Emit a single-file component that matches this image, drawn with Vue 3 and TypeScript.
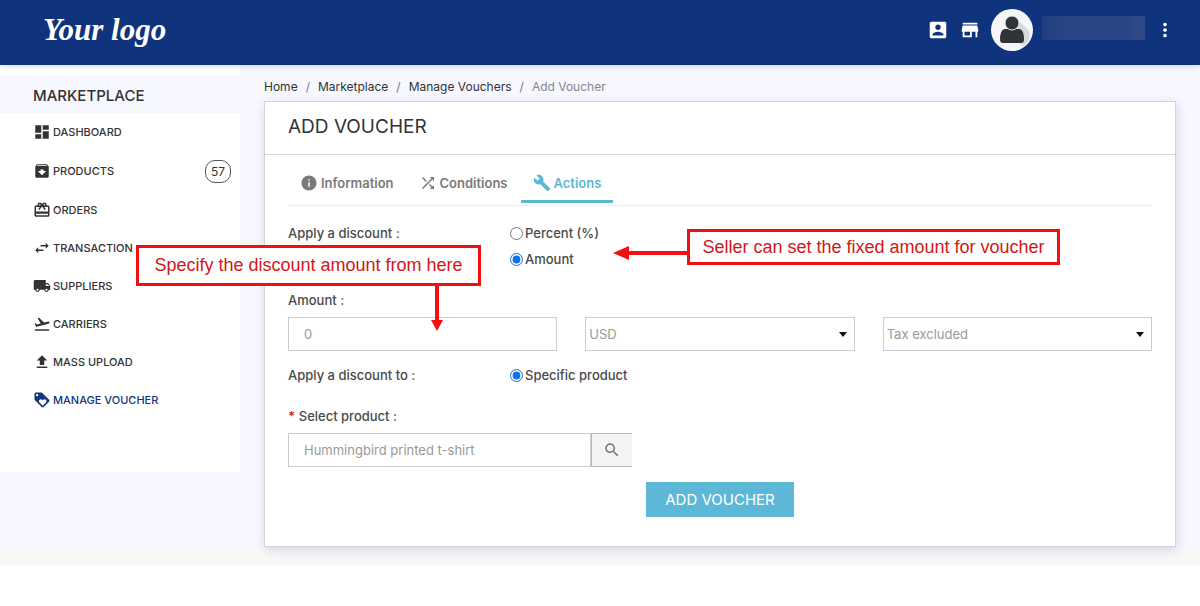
<script setup lang="ts">
import { ref } from 'vue'

interface MenuItem {
  label: string
  icon: string
  badge?: number
  active?: boolean
}

interface Tab {
  label: string
  icon: string
}

const menu: MenuItem[] = [
  { label: 'DASHBOARD', icon: 'M3 13h8V3H3v10zm0 8h8v-6H3v6zm10 0h8V11h-8v10zm0-18v6h8V3h-8z' },
  {
    label: 'PRODUCTS',
    badge: 57,
    icon: 'M20.54 5.23l-1.39-1.68C18.88 3.21 18.47 3 18 3H6c-.47 0-.88.21-1.16.55L3.46 5.23C3.17 5.57 3 6.02 3 6.5V19c0 1.1.9 2 2 2h14c1.1 0 2-.9 2-2V6.5c0-.48-.17-.93-.46-1.27zM12 17.5L6.5 12H10v-2h4v2h3.5L12 17.5zM5.12 5l.81-1h12l.94 1H5.12z',
  },
  {
    label: 'ORDERS',
    icon: 'M20 6h-2.18c.11-.31.18-.65.18-1 0-1.66-1.34-3-3-3-1.05 0-1.96.54-2.5 1.35l-.5.67-.5-.68C10.96 2.54 10.05 2 9 2 7.34 2 6 3.34 6 5c0 .35.07.69.18 1H4c-1.11 0-1.99.89-1.99 2L2 19c0 1.11.89 2 2 2h16c1.11 0 2-.89 2-2V8c0-1.11-.89-2-2-2zm-5-2c.55 0 1 .45 1 1s-.45 1-1 1-1-.45-1-1 .45-1 1-1zM9 4c.55 0 1 .45 1 1s-.45 1-1 1-1-.45-1-1 .45-1 1-1zm11 15H4v-2h16v2zm0-5H4V8h5.08L7 10.83 8.62 12 11 8.76l1-1.36 1 1.36L15.38 12 17 10.83 14.92 8H20v6z',
  },
  { label: 'TRANSACTION', icon: 'M6.99 11L3 15l3.99 4v-3H14v-2H6.99v-3zM21 9l-3.99-4v3H10v2h7.01v3L21 9z' },
  {
    label: 'SUPPLIERS',
    icon: 'M20 8h-3V4H3c-1.1 0-2 .9-2 2v11h2c0 1.66 1.34 3 3 3s3-1.34 3-3h6c0 1.66 1.34 3 3 3s3-1.34 3-3h2v-5l-3-4zM6 18.5c-.83 0-1.5-.67-1.5-1.5s.67-1.5 1.5-1.5 1.5.67 1.5 1.5-.67 1.5-1.5 1.5zm13.5-9l1.96 2.5H17V9.5h2.5zm-1.5 9c-.83 0-1.5-.67-1.5-1.5s.67-1.5 1.5-1.5 1.5.67 1.5 1.5-.67 1.5-1.5 1.5z',
  },
  {
    label: 'CARRIERS',
    icon: 'M2.5 19h19v2h-19zm19.57-9.36c-.21-.8-1.04-1.28-1.84-1.06L14.92 10l-6.9-6.43-1.93.51 4.14 7.17-4.97 1.33-1.97-1.54-1.45.39 1.82 3.16.77 1.33 1.6-.43 5.31-1.42 4.35-1.16L21 11.49c.81-.23 1.28-1.05 1.07-1.85z',
  },
  { label: 'MASS UPLOAD', icon: 'M9 16h6v-6h4l-7-7-7 7h4zm-4 2h14v2H5z' },
  {
    label: 'MANAGE VOUCHER',
    active: true,
    icon: 'M21.41 11.58l-9-9C12.05 2.22 11.55 2 11 2H4c-1.1 0-2 .9-2 2v7c0 .55.22 1.05.59 1.42l9 9c.36.36.86.58 1.41.58.55 0 1.05-.22 1.41-.59l7-7c.37-.36.59-.86.59-1.41 0-.55-.23-1.06-.59-1.42zM5.5 7C4.67 7 4 6.33 4 5.5S4.67 4 5.5 4 7 4.67 7 5.5 6.33 7 5.5 7zm11.77 8.27L13 19.54l-4.27-4.27C8.28 14.81 8 14.19 8 13.5c0-1.38 1.12-2.5 2.5-2.5.69 0 1.32.28 1.77.74l.73.72.73-.73c.45-.45 1.08-.73 1.77-.73 1.38 0 2.5 1.12 2.5 2.5 0 .69-.28 1.32-.73 1.77z',
  },
]

const tabs: Tab[] = [
  {
    label: 'Information',
    icon: 'M12 2C6.48 2 2 6.48 2 12s4.48 10 10 10 10-4.48 10-10S17.52 2 12 2zm1 15h-2v-6h2v6zm0-8h-2V7h2v2z',
  },
  {
    label: 'Conditions',
    icon: 'M10.59 9.17L5.41 4 4 5.41l5.17 5.17 1.42-1.41zM14.5 4l2.04 2.04L4 18.59 5.41 20 17.96 7.46 20 9.5V4h-5.5zm.33 9.41l-1.41 1.41 3.13 3.13L14.5 20H20v-5.5l-2.04 2.04-3.13-3.13z',
  },
  {
    label: 'Actions',
    icon: 'M22.7 19l-9.1-9.1c.9-2.3.4-5-1.5-6.9-2-2-5-2.4-7.4-1.3L9 6 6 9 1.6 4.7C.4 7.1.9 10.1 2.9 12.1c1.9 1.9 4.6 2.4 6.9 1.5l9.1 9.1c.4.4 1 .4 1.4 0l2.3-2.3c.5-.4.5-1.1.1-1.4z',
  },
]

const activeTab = ref('Actions')
const discountType = ref('amount')
const discountTarget = ref('specific')
const currency = ref('USD')
const tax = ref('excluded')
const amount = ref('')
const product = ref('')
</script>

<template>
  <div class="page">
    <header class="topbar">
      <a class="logo" href="#">Your logo</a>
      <div class="account">
        <a href="#" class="top-icon" aria-label="Profile">
          <svg viewBox="0 0 24 24"><path d="M3 5v14c0 1.1.89 2 2 2h14c1.1 0 2-.9 2-2V5c0-1.1-.9-2-2-2H5c-1.11 0-2 .9-2 2zm12 4c0 1.66-1.34 3-3 3s-3-1.34-3-3 1.34-3 3-3 3 1.34 3 3zm-9 8c0-2 4-3.1 6-3.1s6 1.1 6 3.1v1H6v-1z" /></svg>
        </a>
        <a href="#" class="top-icon" aria-label="Shop">
          <svg viewBox="0 0 24 24"><path d="M20 4H4v2h16V4zm1 10v-2l-1-5H4l-1 5v2h1v6h10v-6h4v6h2v-6h1zm-9 4H6v-4h6v4z" /></svg>
        </a>
        <svg class="avatar" viewBox="0 0 42 42">
          <circle cx="21" cy="21" r="21" fill="#f5f6f8" />
          <path d="M26 10L38 22c2 6-1 12-6 15l-4-3z" fill="#d5d8dd" />
          <path d="M14 20h14c3 0 5 4 5 10 0 3-1 4-3 4H12c-2 0-3-1-3-4 0-6 2-10 5-10z" fill="#303338" />
          <circle cx="21" cy="14" r="7" fill="#303338" stroke="#e9ebee" />
        </svg>
        <span class="username" aria-hidden="true"></span>
        <button class="more" type="button" aria-label="More">
          <svg viewBox="0 0 24 24"><path d="M12 8c1.1 0 2-.9 2-2s-.9-2-2-2-2 .9-2 2 .9 2 2 2zm0 2c-1.1 0-2 .9-2 2s.9 2 2 2 2-.9 2-2-.9-2-2-2zm0 6c-1.1 0-2 .9-2 2s.9 2 2 2 2-.9 2-2-.9-2-2-2z" /></svg>
        </button>
      </div>
    </header>

    <div class="body">
      <aside class="sidebar">
        <h2>MARKETPLACE</h2>
        <nav class="menu">
          <a v-for="item in menu" :key="item.label" href="#" class="menu-item" :class="{ active: item.active, badged: item.badge }">
            <svg viewBox="0 0 24 24"><path :d="item.icon" /></svg>
            <span class="menu-label">{{ item.label }}</span>
            <span v-if="item.badge" class="badge">{{ item.badge }}</span>
          </a>
        </nav>
      </aside>

      <main class="content">
        <nav class="crumbs" aria-label="Breadcrumb">
          <a href="#">Home</a><i>/</i><a href="#">Marketplace</a><i>/</i><a href="#">Manage Vouchers</a><i>/</i><span>Add Voucher</span>
        </nav>

        <section class="card">
          <h1>ADD VOUCHER</h1>
          <form class="form" @submit.prevent>
            <div class="tabs" role="tablist">
              <button
                v-for="tab in tabs"
                :key="tab.label"
                type="button"
                role="tab"
                class="tab"
                :class="{ active: activeTab === tab.label }"
                :aria-selected="activeTab === tab.label"
                @click="activeTab = tab.label"
              >
                <svg viewBox="0 0 24 24"><path :d="tab.icon" /></svg>
                <span>{{ tab.label }}</span>
              </button>
            </div>

            <div class="choice-row">
              <span id="type-label" class="caption">Apply a discount :</span>
              <div class="choices" role="radiogroup" aria-labelledby="type-label">
                <label><input v-model="discountType" type="radio" name="type" value="percent" /><span>Percent (%)</span></label>
                <label><input v-model="discountType" type="radio" name="type" value="amount" /><span>Amount</span></label>
              </div>
            </div>

            <div class="field">
              <label class="caption" for="amount">Amount :</label>
              <div class="amounts">
                <input id="amount" v-model="amount" class="box" type="text" placeholder="0" />
                <div class="select">
                  <select v-model="currency" class="box" aria-label="Currency"><option value="USD">USD</option></select>
                </div>
                <div class="select">
                  <select v-model="tax" class="box" aria-label="Tax"><option value="excluded">Tax excluded</option></select>
                </div>
              </div>
            </div>

            <div class="choice-row target">
              <span id="target-label" class="caption">Apply a discount to :</span>
              <div class="choices" role="radiogroup" aria-labelledby="target-label">
                <label><input v-model="discountTarget" type="radio" name="target" value="specific" /><span>Specific product</span></label>
              </div>
            </div>

            <div class="field">
              <label class="caption" for="product"><b>*</b> Select product :</label>
              <div class="search">
                <input id="product" v-model="product" class="box" type="text" placeholder="Hummingbird printed t-shirt" />
                <button type="button" aria-label="Search">
                  <svg viewBox="0 0 24 24"><path d="M15.5 14h-.79l-.28-.27C15.41 12.59 16 11.11 16 9.5 16 5.91 13.09 3 9.5 3S3 5.91 3 9.5 5.91 16 9.5 16c1.61 0 3.09-.59 4.23-1.57l.27.28v.79l5 4.99L20.49 19l-4.99-5zm-6 0C7.01 14 5 11.99 5 9.5S7.01 5 9.5 5 14 7.01 14 9.5 11.99 14 9.5 14z" /></svg>
                </button>
              </div>
            </div>

            <button class="submit" type="submit">ADD VOUCHER</button>
          </form>
        </section>
      </main>
    </div>
    <div class="footer-strip"></div>

    <div class="note note-amount">
      Specify the discount amount from here
      <svg class="arrow-down" viewBox="0 0 12 48"><path d="M4 0h4v37h4L6 48 0 37h4z" /></svg>
    </div>
    <div class="note note-fixed">
      Seller can set the fixed amount for voucher
      <svg class="arrow-left" viewBox="0 0 77 14"><path d="M77 5H16V0L0 7l16 7V9h61z" /></svg>
    </div>
  </div>
</template>

<style>
body {
  margin: 0;
  background: #fff;
}
</style>

<style scoped>
.page {
  position: relative;
  font-family: Inter, "Open Sans", sans-serif;
  font-size: 13px;
  color: #333;
}
.page *,
.page *::before {
  box-sizing: border-box;
}
a {
  color: inherit;
  text-decoration: none;
}
svg {
  display: block;
  fill: currentColor;
  flex: none;
}
button,
input,
select {
  font: inherit;
}
.topbar {
  position: relative;
  display: flex;
  align-items: center;
  justify-content: space-between;
  height: 65px;
  padding: 0 24px 5px 43px;
  background: #0f337c;
  box-shadow: 0 1px 6px rgba(40, 50, 90, 0.2);
  color: #fff;
}
.logo {
  font: italic 700 31px/40px "Liberation Serif", cursive;
}
.account {
  display: flex;
  align-items: center;
}
.top-icon svg {
  width: 22px;
  height: 22px;
}
.top-icon {
  margin-right: 10px;
}
.avatar {
  width: 42px;
  height: 42px;
}
.username {
  align-self: flex-start;
  width: 103px;
  height: 24px;
  margin: 7px 9px 0;
  background: linear-gradient(90deg, #213f80, #2a4685 30%, #294484 80%, #2f4a86);
}
.more {
  padding: 0;
  border: 0;
  background: none;
  color: inherit;
}
.more svg {
  width: 22px;
  height: 22px;
}
.body {
  display: flex;
  align-items: flex-start;
  background: #f6f7ff;
}
.sidebar {
  flex: 0 0 240px;
  padding-top: 11px;
  background: #fff;
}
.sidebar h2 {
  margin: 0;
  padding: 2px 0 0 33px;
  background: #f6f7ff;
  font-size: 15px;
  font-weight: 500;
  line-height: 35px;
}
.menu {
  display: flex;
  flex-direction: column;
  padding: 0 9px 53px 33px;
}
.menu-item {
  display: flex;
  align-items: center;
  gap: 2px;
  height: 38px;
  font-size: 11px;
  font-weight: 500;
}
.menu-item svg {
  width: 18px;
  height: 18px;
}
.menu-item.badged {
  height: 40px;
}
.menu-item.active {
  color: #12357e;
}
.badge {
  margin-left: auto;
  padding: 0 5px;
  border: 1px solid #555;
  border-radius: 10px;
  font-size: 12px;
  font-weight: 400;
  line-height: 21px;
}
.content {
  flex: 1;
  min-width: 0;
  padding: 11px 24px 1px;
}
.crumbs {
  display: flex;
  height: 25px;
  font-size: 12px;
  line-height: 21px;
  white-space: nowrap;
}
.crumbs i {
  margin: 0 8px;
  color: #777;
  font-style: normal;
}
.crumbs span {
  color: #888;
}
.card {
  border: 1px solid #d3d4da;
  background: #fff;
  box-shadow: 1px 3px 10px rgba(50, 50, 100, 0.16);
}
h1 {
  margin: 0;
  padding: 0 23px 2px;
  border-bottom: 1px solid #d3d4d8;
  font-size: 19px;
  font-weight: 400;
  line-height: 50px;
}
.form {
  display: flex;
  flex-direction: column;
  padding: 10px 23px 29px;
  color: #4a4a4a;
}
.tabs {
  display: flex;
  gap: 1px;
  height: 41px;
  border-bottom: 1px solid #eee;
}
.tab {
  display: flex;
  align-items: center;
  gap: 3px;
  height: 38px;
  padding: 0 12px;
  border: 0;
  border-bottom: 3px solid transparent;
  background: none;
  color: #7a7a7a;
  font-weight: 600;
}
.tab svg {
  width: 18px;
  height: 18px;
}
.tab.active {
  border-color: #5cb8ce;
  color: #5cb8d6;
}
.caption {
  font-weight: 500;
  line-height: 20px;
}
.caption b {
  color: #d9301a;
}
.choice-row {
  display: grid;
  grid-template-columns: minmax(0, 222px) 1fr;
  margin-top: 17px;
}
.choices {
  display: flex;
  flex-direction: column;
  align-items: flex-start;
  gap: 6px;
}
.choices label {
  display: flex;
  align-items: center;
  gap: 2px;
  font-weight: 500;
  line-height: 20px;
}
.choices input {
  width: 13px;
  height: 13px;
  margin: 0;
  accent-color: #0b74e8;
}
.field {
  display: flex;
  flex-direction: column;
  gap: 7px;
  margin-top: 21px;
}
.choice-row.target {
  margin-top: 14px;
}
.amounts {
  display: grid;
  grid-template-columns: repeat(3, minmax(0, 1fr));
  gap: 28px;
}
.box {
  width: 100%;
  height: 34px;
  padding: 0 15px;
  border: 1px solid #ccc;
  border-radius: 0;
  outline: 0;
  background: #fff;
  color: #999;
}
.box::placeholder {
  color: #999;
  opacity: 1;
}
.select {
  position: relative;
}
.select .box {
  padding: 0 3px;
  appearance: none;
}
.select::after {
  content: "";
  position: absolute;
  top: 15px;
  right: 8px;
  border: 4px solid transparent;
  border-top: 5px solid #111;
  border-bottom: 0;
  pointer-events: none;
}
.search {
  display: flex;
  width: 100%;
  max-width: 344px;
}
.search .box {
  flex: 1;
  min-width: 0;
}
.search button {
  display: flex;
  align-items: center;
  justify-content: center;
  width: 41px;
  padding: 0;
  border: 1px solid #bbb;
  border-width: 1px 0 1px 1px;
  background: #f4f4f4;
  color: #777;
}
.search svg {
  width: 18px;
  height: 18px;
}
.submit {
  align-self: center;
  margin-top: 15px;
  padding: 0 19px;
  border: 0;
  background: #5cb8d6;
  color: #fff;
  font-size: 15px;
  line-height: 35px;
}
.footer-strip {
  height: 18px;
  background: #f8f8f8;
}
.note {
  position: absolute;
  border: 3px solid #f01010;
  background: #fff;
  color: #d01818;
  font: 18px/30px "Liberation Sans", Arial, sans-serif;
  text-align: center;
  white-space: nowrap;
}
.note svg {
  position: absolute;
  fill: #f01010;
}
.note-amount {
  top: 245px;
  left: 136px;
  width: 345px;
  padding: 2px 0 3px;
}
.note-fixed {
  top: 229px;
  left: 687px;
  width: 373px;
}
.arrow-down {
  top: 100%;
  left: 292px;
  width: 12px;
  height: 48px;
}
.arrow-left {
  top: 14px;
  right: 100%;
  width: 77px;
  height: 14px;
}
</style>
